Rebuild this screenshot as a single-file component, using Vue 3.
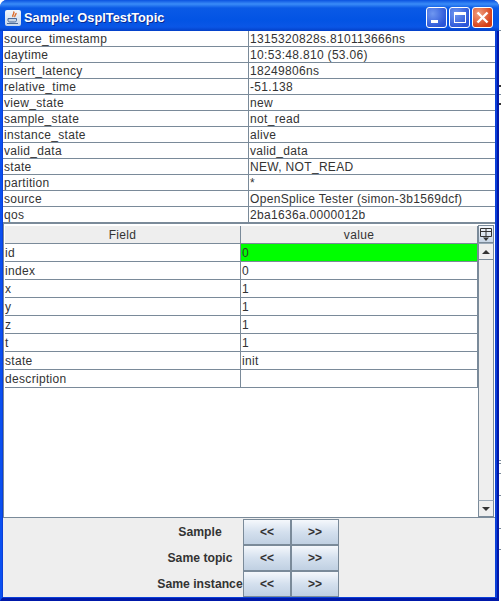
<script setup>
const meta = [
  ['source_timestamp', '1315320828s.810113666ns'],
  ['daytime', '10:53:48.810 (53.06)'],
  ['insert_latency', '18249806ns'],
  ['relative_time', '-51.138'],
  ['view_state', 'new'],
  ['sample_state', 'not_read'],
  ['instance_state', 'alive'],
  ['valid_data', 'valid_data'],
  ['state', 'NEW, NOT_READ'],
  ['partition', '*'],
  ['source', 'OpenSplice Tester (simon-3b1569dcf)'],
  ['qos', '2ba1636a.0000012b'],
]
const fields = [
  ['id', '0', true],
  ['index', '0'],
  ['x', '1'],
  ['y', '1'],
  ['z', '1'],
  ['t', '1'],
  ['state', 'init'],
  ['description', ''],
]
const navs = ['Sample', 'Same topic', 'Same instance']
</script>

<template>
  <div class="desk">
    <div class="window">
      <div class="titlebar">
        <div class="appicon">
          <svg width="16" height="16" viewBox="0 0 16 16">
            <path d="M8.500 1.500C10.500 3.500 6.500 4.500 8 7M11 3C11.500 4.500 9 5.500 10 7" fill="none" stroke="#dc6a28" stroke-width="1.400" />
            <path d="M3 8.500H11.500V10.500C11.500 11.500 10.500 12 9.500 12H5C4 12 3 11.500 3 10.500Z" fill="#c4d2e6" stroke="#4a6a9a" />
            <path d="M2 13.500H13" stroke="#4a6a9a" />
          </svg>
        </div>
        <span class="title">Sample: OsplTestTopic</span>
        <div class="controls">
          <div class="ctl blue"><span class="min"></span></div>
          <div class="ctl blue"><span class="max"></span></div>
          <div class="ctl red">
            <svg width="13" height="13" viewBox="0 0 13 13"><path d="M1.500 1.500L11.500 11.500M11.500 1.500L1.500 11.500" stroke="#fff" stroke-width="2.400" /></svg>
          </div>
        </div>
      </div>
      <div class="body">
        <div class="meta">
          <div v-for="m in meta" :key="m[0]" class="mrow">
            <div class="mkey">{{ m[0] }}</div>
            <div class="mval">{{ m[1] }}</div>
          </div>
        </div>
        <div class="tablewrap">
          <div class="tablearea">
            <div class="thead">
              <div class="th first">Field</div>
              <div class="th second">value</div>
            </div>
            <div class="tbody">
              <div v-for="f in fields" :key="f[0]" class="frow">
                <div class="fkey">{{ f[0] }}</div>
                <div class="fval" :class="{ hl: f[2] }">{{ f[1] }}</div>
              </div>
            </div>
          </div>
          <div class="scroll">
            <div class="corner">
              <svg width="14" height="15" viewBox="0 0 14 15">
                <path d="M1.500 1.500H12.500V9.500H1.500ZM1.500 4.500H12.500M7 1.500V9.500" fill="none" stroke="#333" />
                <path d="M4 10.500H10L7 14Z" fill="#333" />
              </svg>
            </div>
            <div class="sbtn"><span class="up"></span></div>
            <div class="track"></div>
            <div class="sbtn bottom"><span class="down"></span></div>
          </div>
        </div>
        <div class="nav">
          <div v-for="n in navs" :key="n" class="navrow">
            <div class="navlabel">{{ n }}</div>
            <button class="btn">&lt;&lt;</button>
            <button class="btn">&gt;&gt;</button>
          </div>
        </div>
      </div>
    </div>
    <div class="behind"></div>
  </div>
</template>

<style>
html, body { margin: 0; background: #fff; }
</style>

<style scoped>
.desk {
  width: 501px;
  height: 601px;
  overflow: hidden;
  font-family: "Liberation Sans", Arial, sans-serif;
  display: flex;
}
.behind {
  width: 2px;
  height: 601px;
  flex: none;
  background:
    linear-gradient(#7a8a99, #7a8a99) 0 30px / 2px 1px no-repeat,
    linear-gradient(#333, #333) 0 85px / 2px 2px no-repeat,
    linear-gradient(#7a8a99, #7a8a99) 0 94px / 2px 1px no-repeat,
    linear-gradient(#333, #333) 0 103px / 2px 2px no-repeat,
    linear-gradient(#7a8a99, #7a8a99) 0 460px / 2px 1px no-repeat,
    linear-gradient(#7a8a99, #7a8a99) 0 463px / 2px 1px no-repeat,
    linear-gradient(#7a8a99, #7a8a99) 0 473px / 2px 1px no-repeat,
    linear-gradient(#7a8a99, #7a8a99) 0 495px / 2px 1px no-repeat,
    linear-gradient(#7a8a99, #7a8a99) 0 528px / 2px 1px no-repeat,
    linear-gradient(#7a8a99, #7a8a99) 0 549px / 2px 1px no-repeat;
}
.window {
  width: 499px;
  height: 601px;
  flex: none;
  background: #0a3fd8;
  border-radius: 7px 7px 0 0;
  box-sizing: border-box;
  padding: 0 2px 1px 1px;
  display: flex;
  flex-direction: column;
  border-left: 2px solid #0a50f0;
  border-right: 2px solid #0018a8;
  border-bottom: 3px solid #0018a8;
}
.titlebar {
  height: 31px;
  flex: none;
  margin: 0 -4px 0 -3px;
  padding: 4px 6px 0 5px;
  box-sizing: border-box;
  border-radius: 7px 7px 0 0;
  background: linear-gradient(#0a52e0 0, #3a8cf8 4px, #0a5ae6 8px, #0354e4 20px, #0a56e6 27px, #0340c8 31px);
  display: flex;
  align-items: center;
  gap: 3px;
}
.appicon {
  width: 16px;
  height: 16px;
  background: linear-gradient(#f2f6fc, #c8d6ea);
  border-radius: 2px;
}
.title {
  color: #fff;
  font-weight: bold;
  font-size: 12.800px;
  text-shadow: 1px 1px 0 #0a2a90;
  flex: 1;
}
.controls { display: flex; gap: 2px; }
.ctl {
  width: 21px;
  height: 21px;
  box-sizing: border-box;
  border: 1px solid #fff;
  border-radius: 3px;
  position: relative;
  display: flex;
  align-items: center;
  justify-content: center;
}
.blue { background: radial-gradient(circle at 30% 30%, #6f97f0, #2b56d8 75%); }
.red { background: radial-gradient(circle at 30% 30%, #f0a080, #d63c14 75%); }
.min {
  position: absolute;
  left: 4px;
  bottom: 4px;
  width: 7px;
  height: 3px;
  background: #fff;
}
.max {
  width: 12px;
  height: 11px;
  box-sizing: border-box;
  border: 1px solid #fff;
  border-top-width: 3px;
}
.body {
  flex: 1;
  min-height: 0;
  background: #eeeeee;
  display: flex;
  flex-direction: column;
  color: #333;
}
.meta { background: #fff; flex: none; }
.mrow {
  display: flex;
  height: 16px;
  box-sizing: border-box;
  border-bottom: 1px solid #7a8a99;
  font-size: 12px;
  line-height: 17px;
  letter-spacing: 0.320px;
}
.mkey {
  width: 246px;
  flex: none;
  box-sizing: border-box;
  padding-left: 1px;
  border-right: 1px solid #7a8a99;
}
.mval { padding-left: 1px; }
.tablewrap {
  display: flex;
  height: 295px;
  flex: none;
  box-sizing: border-box;
  border-top: 1px solid #7a8a99;
  border-bottom: 1px solid #7a8a99;
  border-left: 1px solid #7a8a99;
  padding: 1px 1px 0 1px;
  background: #fff;
}
.tablearea { flex: 1; min-width: 0; }
.thead { display: flex; height: 19px; background: #eeeeee; box-sizing: border-box; border-bottom: 1px solid #7a8a99; border-top: 1px solid #fff; }
.th {
  font-size: 12px;
  line-height: 18px;
  text-align: center;
  box-sizing: border-box;
  letter-spacing: 0.320px;
}
.first { width: 236px; border-right: 1px solid #7a8a99; }
.second { flex: 1; border-right: 1px solid #7a8a99; }
.frow {
  display: flex;
  height: 18px;
  box-sizing: border-box;
  border-bottom: 1px solid #7a8a99;
  font-size: 12px;
  line-height: 19px;
  letter-spacing: 0.320px;
}
.fkey {
  width: 236px;
  flex: none;
  box-sizing: border-box;
  border-right: 1px solid #7a8a99;
}
.fval {
  flex: 1;
  padding-left: 1px;
  border-right: 1px solid #7a8a99;
}
.hl { background: #00ff00; }
.scroll {
  width: 16px;
  flex: none;
  display: flex;
  flex-direction: column;
  background: #eeeeee;
}
.corner {
  height: 18px;
  box-sizing: border-box;
  background: linear-gradient(#f4f7fb, #c8d6e6);
  border: 1px solid #7a8a99;
  display: flex;
  align-items: center;
  justify-content: center;
}
.sbtn {
  height: 17px;
  flex: none;
  box-sizing: border-box;
  background: #eeeeee;
  border: 1px solid #7a8a99;
  border-top-color: #9aa8b6;
  display: flex;
  align-items: center;
  justify-content: center;
}
.track { flex: 1; background: #eeeeee; border-left: 1px solid #7a8a99; border-right: 1px solid #7a8a99; }
.up { width: 0; height: 0; border: 4px solid transparent; border-top: 0; border-bottom: 4px solid #333; }
.down { width: 0; height: 0; border: 4px solid transparent; border-bottom: 0; border-top: 4px solid #333; }
.nav {
  flex: 1;
  display: flex;
  flex-direction: column;
  align-items: center;
  padding-top: 1px;
}
.navrow { display: flex; height: 26px; align-items: stretch; margin-right: 2px; }
.navlabel {
  width: 86px;
  box-sizing: border-box;
  font-size: 12.200px;
  font-weight: bold;
  line-height: 26px;
  text-align: center;
  white-space: nowrap;
}
.btn {
  width: 48px;
  height: 26px;
  margin: 0;
  padding: 0;
  box-sizing: border-box;
  border: 1px solid #7a8a99;
  background: linear-gradient(#f5f8fc, #d4e0ee 50%, #c0d0e2);
  font-family: inherit;
  font-size: 12px;
  font-weight: bold;
  color: #333;
}
</style>
